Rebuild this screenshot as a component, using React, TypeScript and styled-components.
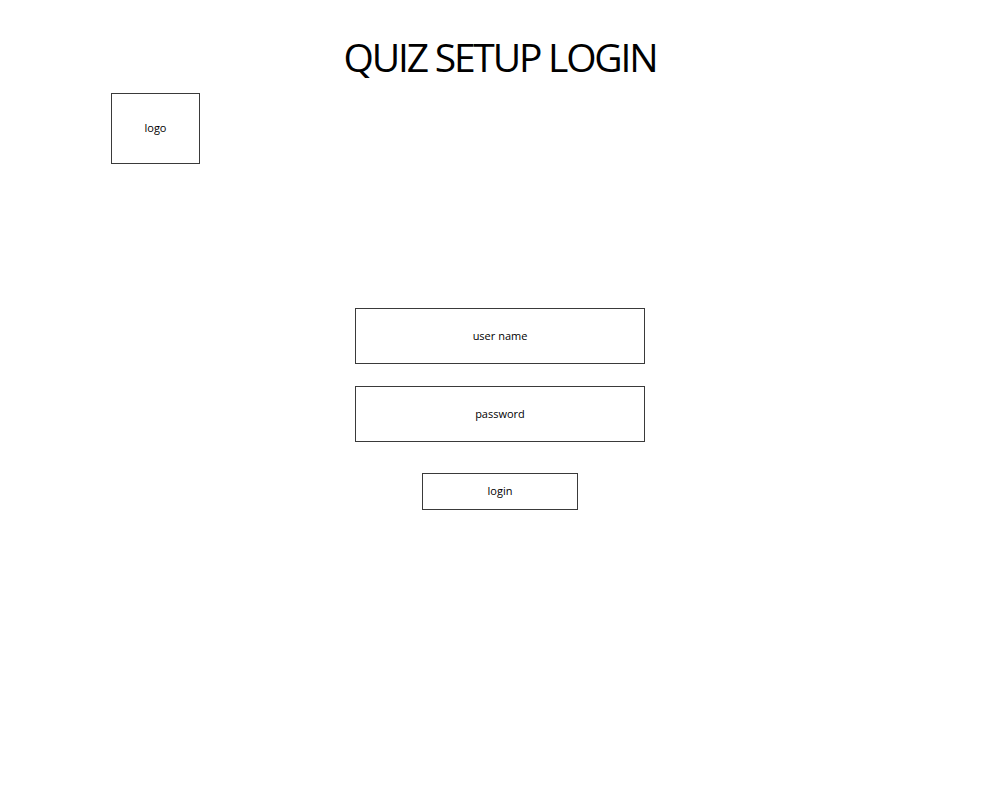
import styled, { createGlobalStyle } from "styled-components";
import React from "react";

const GlobalStyle = createGlobalStyle`
    body {
        margin: 0;
        background: #fff;
        font-family: "Open Sans", "Noto Sans", sans-serif;
        color: #000;
    }
`;

const Page = styled.main`
    display: flex;
    flex-direction: column;
    width: 1000px;
    min-height: 800px;
    padding-top: 33px;
    box-sizing: border-box;
`;

const Title = styled.h1`
    margin: 0;
    height: 50px;
    line-height: 48px;
    text-align: center;
    font-size: 39px;
    font-weight: 400;
    letter-spacing: -2.2px;
`;

const LogoRow = styled.div`
    display: flex;
    margin-top: 10px;
    padding-left: 111px;
`;

const LogoBox = styled.div`
    display: flex;
    align-items: center;
    justify-content: center;
    width: 89px;
    height: 71px;
    box-sizing: border-box;
    border: 1px solid #3a3a3a;
    font-size: 11px;
    padding-bottom: 2px;
`;

//━━━━━━━━━━━━━━━━━━━━━━━━━━━━━━━━━━━━
const Form = styled.form`
    display: flex;
    flex-direction: column;
    align-items: center;
    gap: 22px;
    margin-top: 144px;
`;

const Field = styled.input`
    width: 290px;
    height: 56px;
    box-sizing: border-box;
    border: 1px solid #3a3a3a;
    border-radius: 0;
    background: #fff;
    outline: none;
    padding: 0 10px 2px;
    text-align: center;
    font-family: "Open Sans", "Noto Sans", sans-serif;
    font-size: 11px;
    color: #000;
    &::placeholder {
        color: #000;
        opacity: 1;
    }
`;

const LoginButton = styled.button<{ $gap: number }>`
    width: 156px;
    height: 37px;
    margin-top: ${(props) => props.$gap}px;
    box-sizing: border-box;
    border: 1px solid #3a3a3a;
    border-radius: 0;
    background: #fff;
    padding: 0 0 2px;
    font-family: "Open Sans", "Noto Sans", sans-serif;
    font-size: 11px;
    color: #000;
    cursor: pointer;
`;

function App() {
    return (
        <>
            <GlobalStyle />
            <Page>
                <Title>QUIZ SETUP LOGIN</Title>
                <LogoRow>
                    <LogoBox>logo</LogoBox>
                </LogoRow>
                <Form onSubmit={(e) => e.preventDefault()}>
                    <Field placeholder="user name" />
                    <Field type="password" placeholder="password" />
                    <LoginButton type="submit" $gap={9}>login</LoginButton>
                </Form>
            </Page>
        </>
    );
}

export default App;
